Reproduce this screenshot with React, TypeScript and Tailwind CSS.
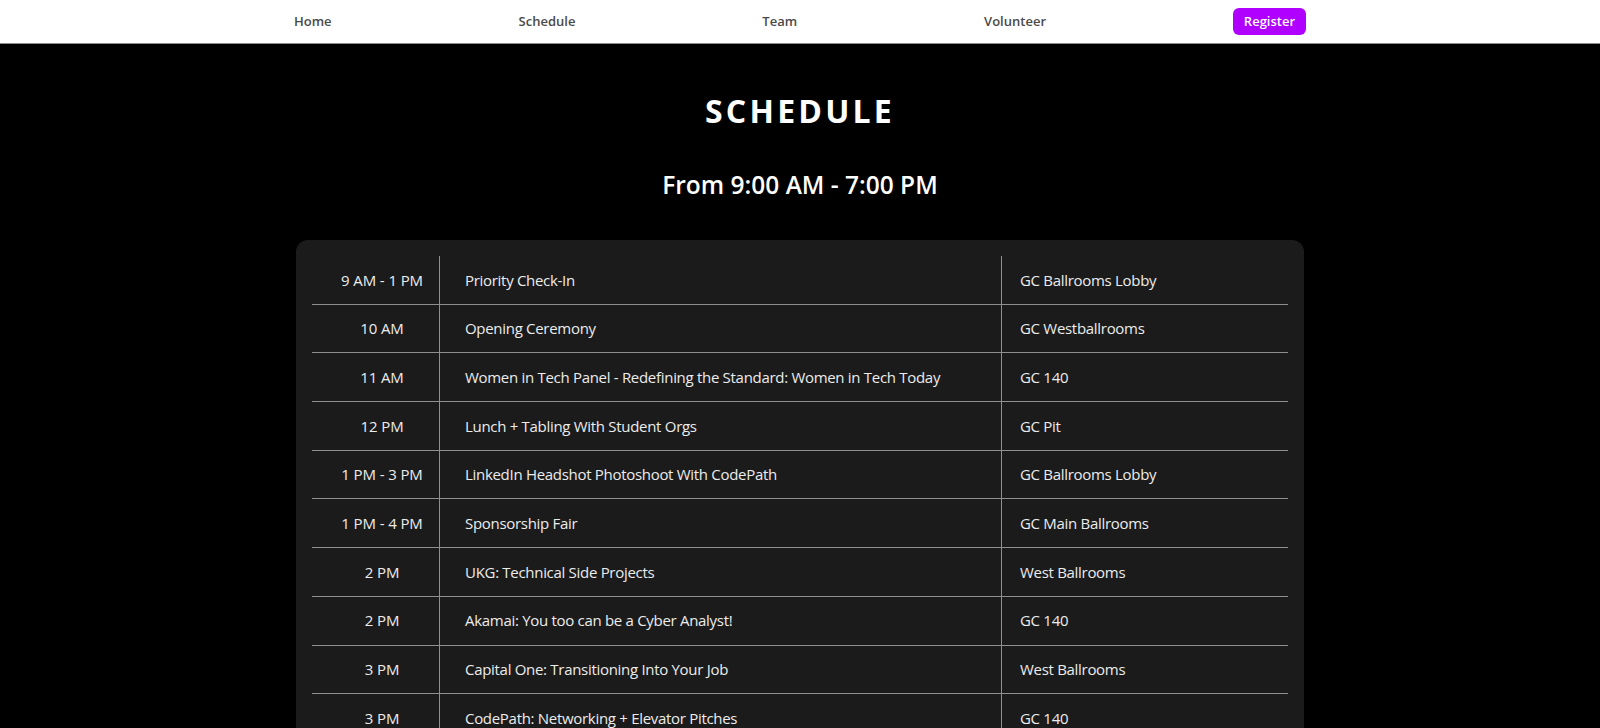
import React from "react";

interface ScheduleItem {
  time: string;
  event: string;
  location: string;
}

const navLinks = ["Home", "Schedule", "Team", "Volunteer"];

const schedule: ScheduleItem[] = [
  { time: "9 AM - 1 PM", event: "Priority Check-In", location: "GC Ballrooms Lobby" },
  { time: "10 AM", event: "Opening Ceremony", location: "GC Westballrooms" },
  {
    time: "11 AM",
    event: "Women in Tech Panel - Redefining the Standard: Women in Tech Today",
    location: "GC 140",
  },
  { time: "12 PM", event: "Lunch + Tabling With Student Orgs", location: "GC Pit" },
  {
    time: "1 PM - 3 PM",
    event: "LinkedIn Headshot Photoshoot With CodePath",
    location: "GC Ballrooms Lobby",
  },
  { time: "1 PM - 4 PM", event: "Sponsorship Fair", location: "GC Main Ballrooms" },
  { time: "2 PM", event: "UKG: Technical Side Projects", location: "West Ballrooms" },
  { time: "2 PM", event: "Akamai: You too can be a Cyber Analyst!", location: "GC 140" },
  { time: "3 PM", event: "Capital One: Transitioning Into Your Job", location: "West Ballrooms" },
  { time: "3 PM", event: "CodePath: Networking + Elevator Pitches", location: "GC 140" },
];

function Navbar() {
  return (
    <nav className="h-[44px] border-b border-[#8c8c8c] bg-white">
      <div className="mx-auto flex h-[43px] w-[1012px] items-center justify-between">
        {navLinks.map((link) => (
          <a key={link} href="#" className="text-[13px] font-semibold text-[#4a4a4a]">
            {link}
          </a>
        ))}
        <button className="h-[27px] w-[73px] rounded-md bg-[#b000ff] text-[13px] font-semibold text-white">
          Register
        </button>
      </div>
    </nav>
  );
}

function ScheduleTable() {
  return (
    <div className="mx-auto w-[1008px] rounded-xl bg-[#1b1b1b] px-4 pt-4 pb-4">
      <div className="flex flex-col">
        {schedule.map((item, i) => (
          <div
            key={i}
            className={`flex h-[48.7px] text-[15px] text-[#ececec] ${
              i < schedule.length - 1 ? "border-b border-[#8f8f8f]" : ""
            }`}
          >
            <div className="flex w-[127px] items-center justify-center pl-[13px] tracking-[-0.1px]">
              {item.time}
            </div>
            <div className="flex w-[562px] items-center border-l border-[#8f8f8f] pl-[25px] tracking-[-0.3px]">
              {item.event}
            </div>
            <div className="flex flex-1 items-center border-l border-[#8f8f8f] pl-[18px] tracking-[-0.3px]">
              {item.location}
            </div>
          </div>
        ))}
      </div>
    </div>
  );
}

export default function App() {
  return (
    <div className="min-h-screen bg-black font-['Segoe_UI','Open_Sans',sans-serif]">
      <Navbar />
      <main className="pb-16">
        <h1 className="mt-[47px] text-center text-[32px] leading-[40px] font-bold tracking-[0.1em] text-white">
          SCHEDULE
        </h1>
        <h2 className="mt-[38px] text-center text-[24.5px] leading-[32px] font-semibold text-white">
          From 9:00 AM - 7:00 PM
        </h2>
        <div className="mt-[39px]">
          <ScheduleTable />
        </div>
      </main>
    </div>
  );
}
